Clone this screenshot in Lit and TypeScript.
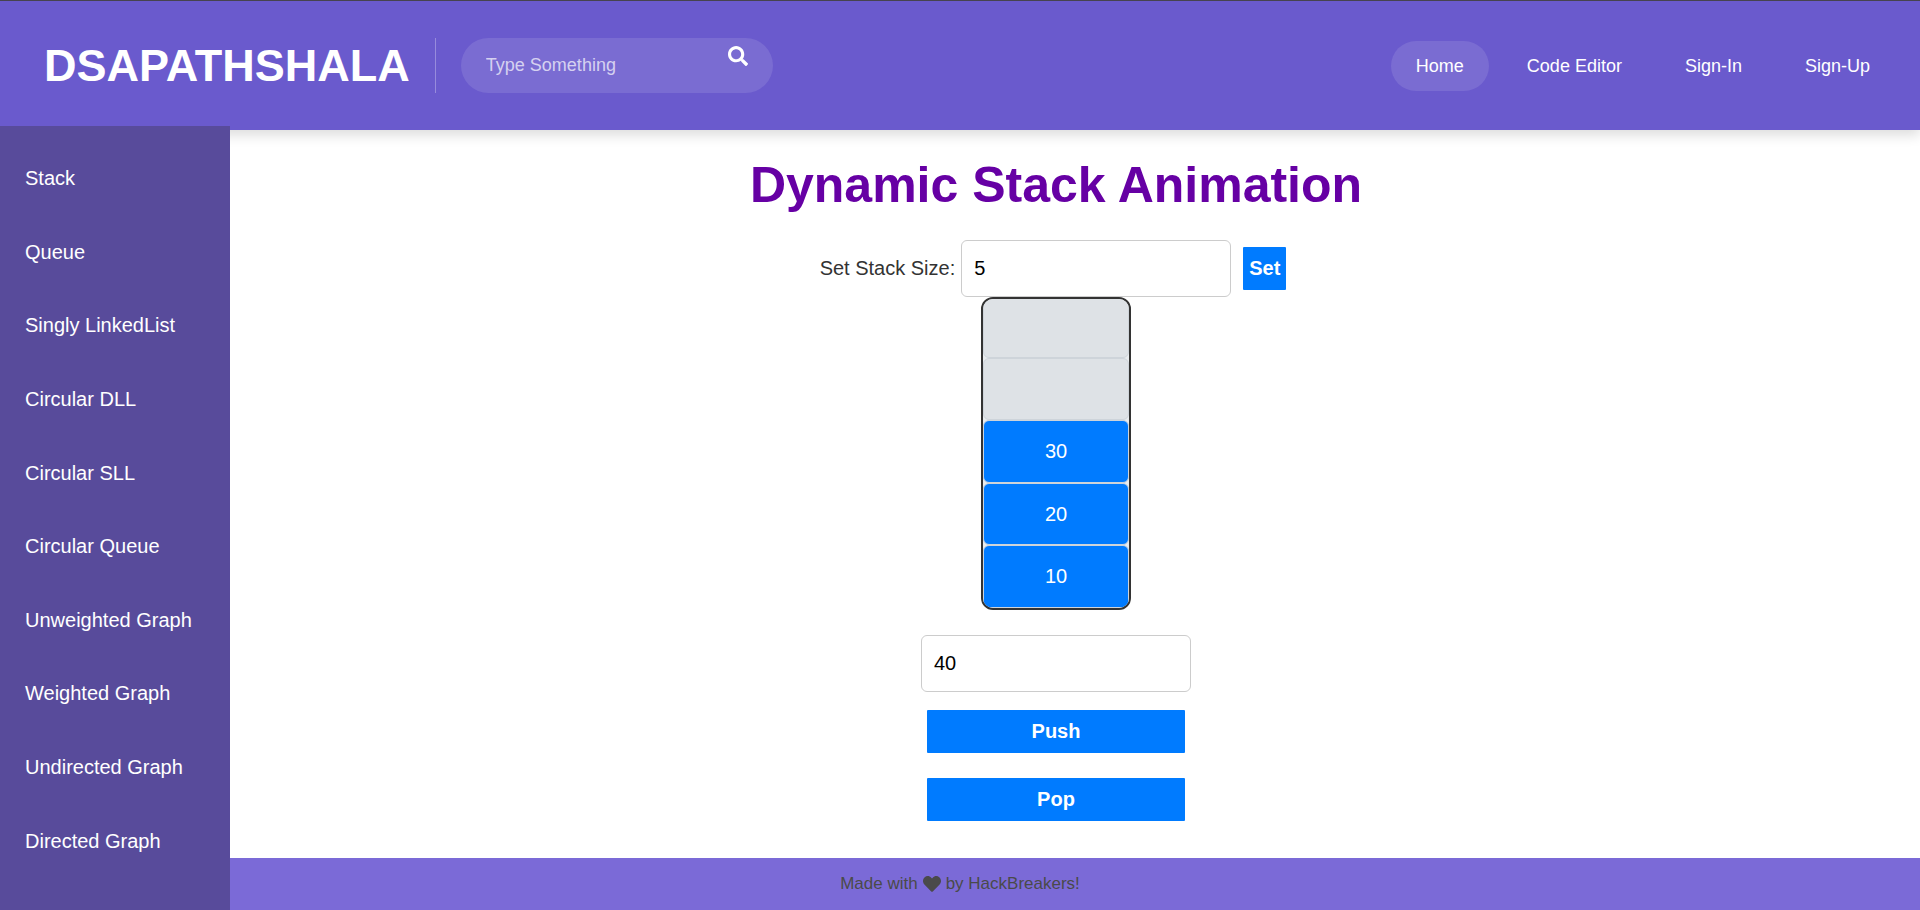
import { LitElement, html, css } from "lit";
import { customElement, property, state } from "lit/decorators.js";
import { classMap } from "lit/directives/class-map.js";

@customElement("site-header")
class SiteHeader extends LitElement {
  static styles = css`
    :host {
      display: block;
    }
    .bar {
      display: flex;
      align-items: center;
      box-sizing: border-box;
      min-height: 130px;
      padding: 0 25px 0 44px;
      border-top: 1px solid #46434f;
      background: #6a5acd;
      box-shadow: 0 5px 12px rgba(0, 0, 0, 0.14);
      color: #fff;
    }
    .brand {
      color: inherit;
      font-size: 45px;
      font-weight: 700;
      line-height: 54px;
      text-decoration: none;
    }
    .search {
      display: flex;
      align-items: center;
      margin-left: 25px;
      padding-left: 25px;
      border-left: 1px solid rgba(255, 255, 255, 0.3);
    }
    .pill {
      display: flex;
      box-sizing: border-box;
      width: 312px;
      height: 55px;
      padding: 0 25px;
      border-radius: 28px;
      background: rgba(255, 255, 255, 0.11);
    }
    .query {
      flex: 1;
      min-width: 0;
      padding: 0;
      border: 0;
      outline: 0;
      background: none;
      color: #fff;
      font: inherit;
      font-size: 18px;
    }
    .query::placeholder {
      color: rgba(255, 255, 255, 0.7);
      opacity: 1;
    }
    .go {
      align-self: flex-start;
      display: flex;
      padding: 8px 0 0;
      border: 0;
      background: none;
      color: #fff;
      cursor: pointer;
    }
    .glass {
      width: 20px;
      height: 20px;
      fill: currentColor;
    }
    .nav {
      display: flex;
      gap: 13px;
      margin-left: auto;
    }
    .link {
      padding: 0 25px;
      border-radius: 25px;
      color: #fff;
      font-size: 18px;
      line-height: 50px;
      text-decoration: none;
    }
    .current {
      background: rgba(255, 255, 255, 0.11);
    }
  `;

  private links = ["Home", "Code Editor", "Sign-In", "Sign-Up"];

  render() {
    return html`
      <header class="bar">
        <a class="brand" href="#">DSAPATHSHALA</a>
        <form class="search" role="search" @submit=${(e: Event) => e.preventDefault()}>
          <div class="pill">
            <input class="query" type="text" placeholder="Type Something" aria-label="Search" />
            <button class="go" type="submit" aria-label="Search">
              <svg class="glass" viewBox="0 0 512 512" aria-hidden="true">
                <path
                  d="M505 442.700L405.300 343c-4.500-4.500-10.600-7-17-7H372c27.600-35.300 44-79.700 44-128C416 93.100 322.900 0 208 0S0 93.100 0 208s93.100 208 208 208c48.300 0 92.700-16.400 128-44v16.300c0 6.400 2.500 12.500 7 17l99.700 99.700c9.400 9.400 24.600 9.400 33.900 0l28.300-28.300c9.400-9.400 9.400-24.600.1-34zM208 336c-70.700 0-128-57.200-128-128 0-70.700 57.200-128 128-128 70.700 0 128 57.200 128 128 0 70.700-57.200 128-128 128z"
                />
              </svg>
            </button>
          </div>
        </form>
        <nav class="nav">
          ${this.links.map(
            (name, i) =>
              html`<a class=${classMap({ link: true, current: i === 0 })} href="#">${name}</a>`
          )}
        </nav>
      </header>
    `;
  }
}

@customElement("topic-sidebar")
class TopicSidebar extends LitElement {
  static styles = css`
    :host {
      display: flex;
      background: #584b9b;
    }
    .topics {
      flex: 1;
      display: flex;
      flex-direction: column;
      padding: 16px 25px 32px;
    }
    .topic {
      flex: 1;
      display: flex;
      align-items: center;
      min-height: 40px;
      color: #fff;
      font-size: 20px;
      white-space: nowrap;
      text-decoration: none;
    }
  `;

  private topics = [
    "Stack",
    "Queue",
    "Singly LinkedList",
    "Circular DLL",
    "Circular SLL",
    "Circular Queue",
    "Unweighted Graph",
    "Weighted Graph",
    "Undirected Graph",
    "Directed Graph",
  ];

  render() {
    return html`
      <nav class="topics">
        ${this.topics.map((t) => html`<a class="topic" href="#">${t}</a>`)}
      </nav>
    `;
  }
}

@customElement("stack-view")
class StackView extends LitElement {
  static styles = css`
    :host {
      display: block;
    }
    .frame {
      display: flex;
      box-sizing: border-box;
      width: 150px;
      height: 313px;
      border: 2px solid #333;
      border-radius: 12px;
      background: #e9ecef;
      overflow: hidden;
    }
    .cells {
      flex: 1;
      display: flex;
      flex-direction: column-reverse;
      margin: -4px 0 0;
      padding: 0;
      list-style: none;
    }
    .cell {
      flex: 1;
      display: flex;
      align-items: center;
      justify-content: center;
      border: 1px solid #ced4da;
      border-radius: 6px;
      background: #dee2e6;
      font-size: 20px;
    }
    .filled {
      background: #007bff;
      color: #fff;
    }
  `;

  @property({ type: Number }) size = 5;
  @property({ attribute: false }) items: number[] = [];

  render() {
    const slots = Array.from({ length: this.size }, (_, i) => this.items[i]);
    return html`
      <div class="frame">
        <ul class="cells">
          ${slots.map(
            (v) =>
              html`<li class=${classMap({ cell: true, filled: v !== undefined })}>${v ?? ""}</li>`
          )}
        </ul>
      </div>
    `;
  }
}

@customElement("app-root")
class AppRoot extends LitElement {
  static styles = css`
    :host {
      display: grid;
      grid-template: auto 1fr auto / 230px 1fr;
      min-height: 100vh;
      background: #fff;
      color: #333;
      font-family: "Liberation Sans", Arial, sans-serif;
    }
    .header {
      grid-area: 1 / 1 / 2 / 3;
    }
    .sidebar {
      grid-area: 2 / 1 / 4 / 2;
      z-index: 1;
      margin-top: -4px;
    }
    .main {
      grid-area: 2 / 2 / 3 / 3;
      display: flex;
      flex-direction: column;
      align-items: center;
      padding: 26px 38px 24px 0;
    }
    .title {
      margin: 0 0 26px;
      color: #6600a4;
      font-size: 50px;
      line-height: 58px;
    }
    .sizing {
      display: flex;
      align-items: center;
      padding-right: 6px;
    }
    .label {
      margin-right: 6px;
      font-size: 20px;
    }
    .field {
      box-sizing: border-box;
      width: 270px;
      height: 57px;
      padding: 0 12px;
      border: 1px solid #ccc;
      border-radius: 6px;
      background: #fff;
      color: #000;
      font: inherit;
      font-size: 20px;
      appearance: textfield;
    }
    .button {
      height: 43px;
      padding: 0 6px;
      border: 0;
      border-radius: 1px;
      background: #007bff;
      color: #fff;
      font: inherit;
      font-size: 20px;
      font-weight: 700;
      cursor: pointer;
    }
    .set {
      margin-left: 12px;
    }
    .actions {
      display: flex;
      flex-direction: column;
      width: 270px;
      margin-top: 25px;
    }
    .wide {
      margin: 18px 6px 7px;
    }
    .footer {
      grid-area: 3 / 1 / 4 / 3;
      display: flex;
      align-items: center;
      justify-content: center;
      gap: 5px;
      min-height: 52px;
      background: #7b6ad7;
      color: #4a4a4a;
      font-size: 17px;
    }
    .heart {
      width: 18px;
      height: 18px;
      fill: currentColor;
    }
  `;

  @state() private size = 5;
  @state() private items = [10, 20, 30];

  private value(id: string) {
    return Number((this.renderRoot.querySelector(id) as HTMLInputElement).value);
  }

  private resize() {
    this.size = Math.max(1, this.value("#size"));
    this.items = this.items.slice(0, this.size);
  }

  private push() {
    if (this.items.length < this.size) this.items = [...this.items, this.value("#entry")];
  }

  private pop() {
    this.items = this.items.slice(0, -1);
  }

  render() {
    return html`
      <site-header class="header"></site-header>
      <topic-sidebar class="sidebar"></topic-sidebar>
      <main class="main">
        <h1 class="title">Dynamic Stack Animation</h1>
        <div class="sizing">
          <label class="label" for="size">Set Stack Size:</label>
          <input class="field" id="size" type="number" min="1" value="5" />
          <button class="button set" type="button" @click=${this.resize}>Set</button>
        </div>
        <stack-view .size=${this.size} .items=${this.items}></stack-view>
        <div class="actions">
          <input class="field" id="entry" type="number" value="40" aria-label="Value to push" />
          <button class="button wide" type="button" @click=${this.push}>Push</button>
          <button class="button wide" type="button" @click=${this.pop}>Pop</button>
        </div>
      </main>
      <footer class="footer">
        <span>Made with</span>
        <svg class="heart" viewBox="0 0 512 512" aria-label="love">
          <path
            d="M462.300 62.600C407.500 15.900 326 24.300 275.700 76.200L256 96.500l-19.700-20.300C186.100 24.300 104.500 15.900 49.700 62.600c-62.800 53.600-66.100 149.800-9.900 207.900l193.500 199.800c12.500 12.900 32.800 12.900 45.300 0l193.500-199.800c56.300-58.100 53-154.300-9.800-207.900z"
          />
        </svg>
        <span>by HackBreakers!</span>
      </footer>
    `;
  }
}
